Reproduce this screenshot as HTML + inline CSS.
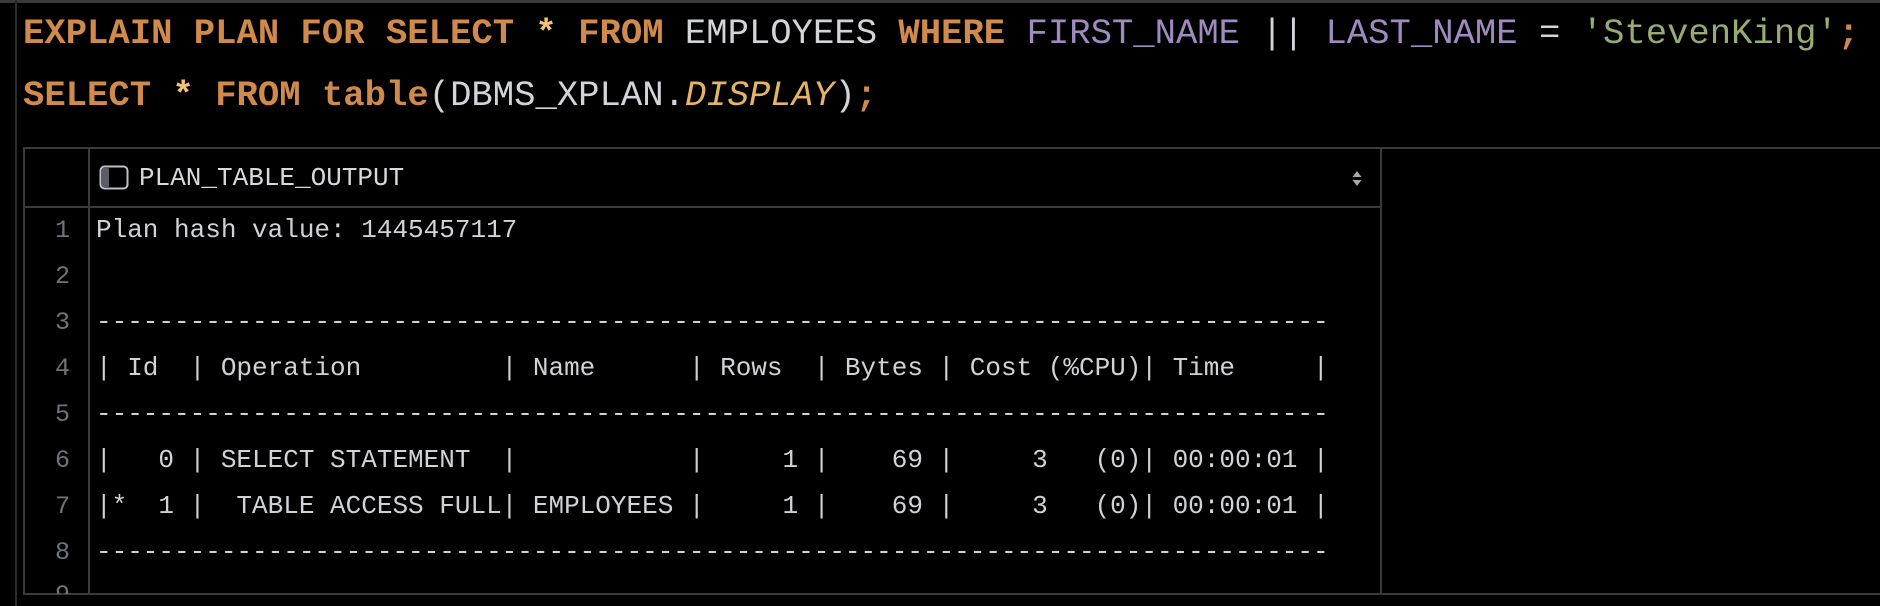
<!DOCTYPE html>
<html><head><meta charset="utf-8"><style>
html,body{margin:0;padding:0;background:#000;width:1880px;height:606px;overflow:hidden;position:relative}
.ed{position:absolute;left:23px;font-family:"Liberation Mono",monospace;font-size:35.6px;white-space:pre;line-height:40px;color:#d2d4d8}
.k{color:#cf8a4c;font-weight:bold}.p{color:#a08bc0}.s{color:#98ab72}.y{color:#f0c27a;font-weight:bold}
.i{color:#e5b565;font-style:italic}
.t{position:absolute;font-family:"Liberation Mono",monospace;font-size:26px;white-space:pre;color:#d0d2d6;line-height:46px}
.ln{position:absolute;left:24px;width:46px;text-align:right;font-family:"Liberation Mono",monospace;font-size:25px;color:#6f737a;line-height:46px}
</style></head><body>
<div style="position:absolute;left:0;top:0;width:1880px;height:3px;background:#3a3a3c"></div>
<div style="position:absolute;left:15px;top:0;width:2px;height:606px;background:#2c2c2e"></div>
<div class="ed" style="top:14px"><span class="k">EXPLAIN PLAN FOR SELECT</span> <span class="y">*</span> <span class="k">FROM</span> EMPLOYEES <span class="k">WHERE</span> <span class="p">FIRST_NAME</span> || <span class="p">LAST_NAME</span> = <span class="s">'StevenKing'</span><span class="k">;</span></div>
<div class="ed" style="top:76px"><span class="k">SELECT</span> <span class="y">*</span> <span class="k">FROM</span> <span class="k">table</span>(DBMS_XPLAN.<span class="i">DISPLAY</span>)<span class="k">;</span></div>

<div style="position:absolute;left:23px;top:147px;width:1857px;height:448px;border-top:2px solid #3a3a3c;border-left:2px solid #3a3a3c;border-bottom:2px solid #3a3a3c;box-sizing:border-box"></div>
<div style="position:absolute;left:88px;top:147px;width:2px;height:448px;background:#3a3a3c"></div>
<div style="position:absolute;left:1380px;top:147px;width:2px;height:448px;background:#3a3a3c"></div>
<div style="position:absolute;left:23px;top:206px;width:1359px;height:2px;background:#3a3a3c"></div>

<svg style="position:absolute;left:99px;top:165px" width="31" height="26" viewBox="0 0 31 26"><rect x="1.5" y="1.5" width="27" height="22" rx="4" fill="none" stroke="#bfc1c6" stroke-width="2"/><rect x="3" y="3" width="7" height="19" rx="1.5" fill="#5b5d63"/></svg>
<div class="t" style="left:139px;top:155px;color:#d6d8dc">PLAN_TABLE_OUTPUT</div>
<svg style="position:absolute;left:1351px;top:170px" width="12" height="17" viewBox="0 0 12 17"><path d="M6 1L10.5 7H1.5Z M6 16L10.5 10H1.5Z" fill="#a7a9ad"/></svg>

<div class="ln" style="top:208px">1</div>
<div class="ln" style="top:254px">2</div>
<div class="ln" style="top:300px">3</div>
<div class="ln" style="top:346px">4</div>
<div class="ln" style="top:392px">5</div>
<div class="ln" style="top:438px">6</div>
<div class="ln" style="top:484px">7</div>
<div class="ln" style="top:530px">8</div>
<div class="ln" style="top:576px;line-height:40px;height:18px;overflow:hidden">9</div>

<div class="t" style="left:96px;top:207px">Plan hash value: 1445457117

-------------------------------------------------------------------------------
| Id  | Operation         | Name      | Rows  | Bytes | Cost (%CPU)| Time     |
-------------------------------------------------------------------------------
|   0 | SELECT STATEMENT  |           |     1 |    69 |     3   (0)| 00:00:01 |
|*  1 |  TABLE ACCESS FULL| EMPLOYEES |     1 |    69 |     3   (0)| 00:00:01 |
-------------------------------------------------------------------------------</div>
</body></html>
